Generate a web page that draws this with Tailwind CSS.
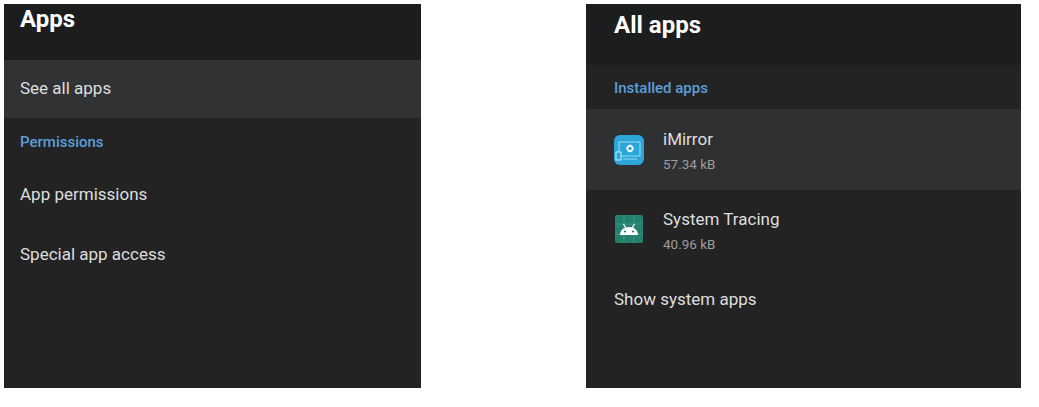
<!DOCTYPE html>
<html>
<head>
<meta charset="utf-8">
<script src="https://cdn.jsdelivr.net/npm/@tailwindcss/browser@4"></script>
</head>
<body class="bg-white w-[1039px] h-[407px] overflow-hidden font-['Roboto',sans-serif]">
<div class="flex pt-1 pl-1 items-start">
  <section class="w-[417px] h-[384px] bg-[#232324] flex flex-col">
    <header class="h-[56px] bg-[#1c1d1e] pl-4 text-white font-bold text-[24px] leading-[30px]">Apps</header>
    <div class="h-[58px] bg-[#313233] pl-4 flex items-center text-[#dedede] text-[17px]">See all apps</div>
    <div class="h-[47px] pl-4 pt-[2px] flex items-center text-[#5a9fd8] text-[15px] font-medium">Permissions</div>
    <div class="h-[60px] pl-4 pb-[1px] flex items-center text-[#dedede] text-[17px]">App permissions</div>
    <div class="h-[60px] pl-4 flex items-center text-[#dedede] text-[17px]">Special app access</div>
  </section>
  <section class="ml-[165px] w-[435px] h-[384px] bg-[#232324] flex flex-col">
    <header class="h-[61px] bg-[#1c1d1e] pl-7 pt-[6px] text-white font-bold text-[24px] leading-[30px]">All apps</header>
    <div class="h-[44px] pl-7 pt-[2px] flex items-center text-[#5a9fd8] text-[15px] font-medium">Installed apps</div>
    <div class="h-[81px] bg-[#2f3031] pl-7 flex items-center">
      <svg class="w-[30px] h-[30px] shrink-0" viewBox="0 0 30 30">
        <rect width="30" height="30" rx="6" fill="#2ba6d8"/>
        <rect x="5" y="7" width="21" height="14" fill="none" stroke="#9adcf2" stroke-width="1"/>
        <circle cx="16" cy="13.500" r="2.600" fill="none" stroke="#fff" stroke-width="1.600"/>
        <path d="M16 9.500v1.500M16 16v1.500M12 13.500h1.500M18.500 13.500h1.500" stroke="#fff" stroke-width="1"/>
        <rect x="2" y="17" width="5" height="8" fill="#2ba6d8" stroke="#c4ecf8" stroke-width="1"/>
        <path d="M9 24h14" stroke="#9adcf2" stroke-width="1"/>
      </svg>
      <div class="ml-[19px] flex flex-col">
        <span class="text-[#dedede] text-[17px] leading-[27px]">iMirror</span>
        <span class="text-[#9c9d9e] text-[13.500px] leading-[20px] mt-[1px]">57.34 kB</span>
      </div>
    </div>
    <div class="h-[80px] pl-7 flex items-center">
      <svg class="w-[30px] h-[30px] shrink-0 -mt-[2px]" viewBox="0 0 30 30">
        <rect x="1" y="1" width="28" height="28" rx="2" fill="#23806f"/>
        <path d="M1 10h28M1 20h28M10 1v28M20 1v28" stroke="#3f9685" stroke-width="1"/>
        <path d="M6 21c0-5 4-8 9-8s9 3 9 8z" fill="#fff"/>
        <path d="M9.500 10l2.500 4M20.500 10l-2.500 4" stroke="#fff" stroke-width="1.200"/>
        <circle cx="11" cy="17.500" r="1.100" fill="#23806f"/>
        <circle cx="19" cy="17.500" r="1.100" fill="#23806f"/>
      </svg>
      <div class="ml-[19px] flex flex-col">
        <span class="text-[#dedede] text-[17px] leading-[27px]">System Tracing</span>
        <span class="text-[#9c9d9e] text-[13.500px] leading-[20px] mt-[1px]">40.96 kB</span>
      </div>
    </div>
    <div class="h-[60px] pl-7 flex items-center text-[#dedede] text-[17px]">Show system apps</div>
  </section>
</div>
</body>
</html>
